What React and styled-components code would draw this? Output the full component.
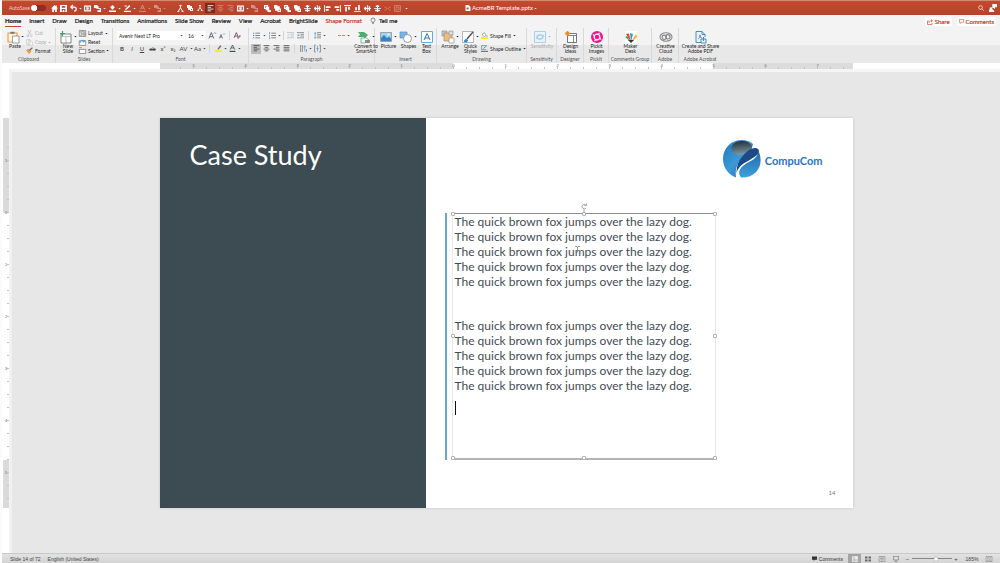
import React from "react";
import styled, { createGlobalStyle } from "styled-components";

const Global = createGlobalStyle`
  * { box-sizing: border-box; }
  body { margin: 0; font-family: "Liberation Sans", Arial, sans-serif; background: #e7e7e7; }
  button, select, input { font-family: inherit; margin: 0; }
`;

/* ---------- icons, all on a 12 x 12 grid ---------- */
const Svg = styled.svg`
  flex: none;
  display: block;
  width: ${(p) => p.$s}px;
  height: ${(p) => p.$s}px;
  overflow: visible;
`;
const B = "#2f8ad0";
const G = "#555";
const S = { fill: "none", stroke: "currentColor", strokeWidth: 1.3 };
const lines = (a) => a.map(([x, y, w], i) => <path key={i} d={`M${x} ${y}h${w}`} {...S} />);

const art = {
  home: <path fill="currentColor" d="M6 0 0 6h2v6h3V8h2v4h3V6h2L10 4V1H8v1z" />,
  save: <path fill="currentColor" fillRule="evenodd" d="M0 0h12v12H0zM3 1.500h6v3H3zM3 7h6v4H7V8.500H5V11H3z" />,
  undo: <path {...S} strokeWidth="2.200" d="M5 0 1.500 3.500 5 7M2 3.500h5c5 0 5 7 0 7" />,
  slide: <path fill="currentColor" fillRule="evenodd" d="M0 1h12v10H0zM2 3v6h8V3zM4 4h4v4H4z" />,
  stack: <path fill="currentColor" d="M0 0h6v2h2v3h4v7H6V9h4V7H6V6H3V5H0z" />,
  fill: <path fill="currentColor" d="M6 0l4 4-4 4-4-4zM0 9.500h12V12H0z" />,
  pen: <path fill="currentColor" d="M9 0l2 2-7 6-2 .5.500-2zM0 10h12v2H0zM1 1h4v1.500H1z" />,
  font: <path {...S} strokeWidth="1.600" d="M2.500 8 6 0l3.500 8M4 5.500h4M0 11h12" />,
  tree: <path {...S} strokeWidth="1.700" d="M4 1h4M6 1v4M2 11l4-6 4 6M1 11h3M8 11h3" />,
  left: lines([[1, 1, 10], [1, 4, 6], [1, 7, 10], [1, 10, 6]]),
  center: lines([[1, 1, 10], [3, 4, 6], [1, 7, 10], [3, 10, 6]]),
  right: lines([[1, 1, 10], [5, 4, 6], [1, 7, 10], [5, 10, 6]]),
  justify: lines([[1, 1, 10], [1, 4, 10], [1, 7, 10], [1, 10, 10]]),
  front: <path fill="currentColor" fillRule="evenodd" d="M0 0h7v3h2v6h3v3H6V9H3V7H0zM2 2v3h1V3h2V2z" />,
  back: <path fill="currentColor" fillRule="evenodd" d="M0 0h6v2h4v4h2v6H6v-2H2V6H0zM8 8v2h2V8z" />,
  distV: <path fill="currentColor" d="M0 5h12v1.500H0zM3 1h6v2.500H3zM2 8h8v2.500H2zM5 0h2v12H5z" />,
  distH: <path fill="currentColor" d="M5 0h1.500v12H5zM1 3h2.500v6H1zM8 2h2.500v8H8zM0 5h12v2H0z" />,
  objL: <path fill="currentColor" d="M0 0h1.500v12H0zM3 2h8v3H3zM3 7h5v3H3z" />,
  objR: <path fill="currentColor" d="M10.500 0H12v12h-1.500zM1 2h8v3H1zM4 7h5v3H4z" />,
  objT: <path fill="currentColor" d="M0 0h12v1.500H0zM2 3h3v8H2zM7 3h3v5H7z" />,
  objB: <path fill="currentColor" d="M0 10.500h12V12H0zM2 4h3v5H2zM7 0h3v9H7z" />,
  group: <path {...S} d="M1 1h10v10H1zM3.500 3.500h5v5h-5z" />,
  flip: <path {...S} d="M1 3l4 3-4 4M11 3 7 6l4 4" />,
  search: <g {...S}><circle cx="5" cy="5" r="3.700" /><path d="m8 8 3.500 3.500" /></g>,
  people: <path fill="#fff" d="M5 0h7v5H9v3L7 6H5zM3 5a2 2 0 0 1 2 2c0 2 3 1 3 5H0c0-4 1-4 1-5a2 2 0 0 1 2-2z" />,
  doc: <g><path fill="#fff" d="M1 0h6l4 4v8H1z" /><path fill="#bd482e" d="M3 5h4v4H3z" /></g>,
  chevron: <path d="M1 4l5 5 5-5z" fill="currentColor" />,
  bulb: <g {...S} strokeWidth="1"><path d="M4 8.500C4 7 2 6.500 2 4a4 4 0 0 1 8 0c0 2.500-2 3-2 4.500zM4 10.500h4" /></g>,
  share: <g {...S}><path d="M4 4H1v7h9V8M4 8c0-4 3-4.500 6-4.500M8 1l3 2.500L8 6" /></g>,
  comment: <path {...S} d="M1 1h10v7H6l-3 3V8H1z" />,
  commentFill: <path fill="currentColor" d="M0 1h12v8H7l-3 3V9H0z" />,
  paste: <g><path d="M1 2h9v9H1z" fill="#fff6e8" stroke="#e79b3c" strokeWidth="1.100" /><path d="M3.500.8h4v2h-4z" fill="#777" /><path d="M5.500 5H12v7H5.500z" fill="#fff" stroke="#777" strokeWidth=".7" /></g>,
  cut: <g fill="none" stroke="#aaa"><path d="M3 0l5 8M9 0 4 8" /><circle cx="3" cy="10" r="1.600" /><circle cx="9" cy="10" r="1.600" stroke="#9cc6e6" /></g>,
  copy: <g fill="#fafafa" stroke="#bbb"><path d="M1 1h6v8H1zM4 3h5l2 2v6H4z" /></g>,
  format: <g><path fill="#ef9a47" d="M0 5l5-2 4 5-4 4z" /><path d="M6 6 11 1" stroke="#666" strokeWidth="2" /></g>,
  newSlide: <g><path d="M1 3h10v9H1z" fill="#fff" stroke="#777" strokeWidth=".9" /><path d="M1 5.500h10M6 5.500V12" stroke="#999" strokeWidth=".6" /><path d="M2.500 0v5M0 2.500h5" stroke="#3ba272" strokeWidth="1.200" /></g>,
  layout: <g><path d="M.5 1h11v10H.5z" fill="#fff" stroke="#555" /><path d="M2 3h8M2 5h3v4H2M7 5h3v4H7z" stroke="#555" fill="none" /></g>,
  reset: <g><path d="M.5 3h11v8H.5z" fill="#fff" stroke="#555" /><path d="M2 7c0-6 6-5 7-2M9 2v3H6" stroke={B} strokeWidth="1.300" fill="none" /></g>,
  section: <g><path d="M.5 4h11v7H.5z" fill="#fff" stroke="#555" /><path d="M0 1h5" stroke="#d87a3c" strokeWidth="1.500" /></g>,
  growA: <g {...S}><path d="M0 11 4 1l4 10M1.500 8h5" /><path d="M8 3l2-2 2 2" stroke={B} /></g>,
  shrinkA: <g {...S}><path d="M1 11 4 3l3 8M2 8h4" /><path d="M8 1l2 2 2-2" stroke={B} /></g>,
  clear: <g {...S}><path d="M0 10 4 1l4 9M1.500 7h5" /><path d="M6 11l5-5" stroke="#cf5ba6" strokeWidth="3" /></g>,
  highlight: <g><path d="M4 7 9 0l2 2-5 6z" fill="#777" /><path d="M0 9h11v3H0z" fill="#ffea00" /></g>,
  colorA: <g {...S}><path d="M2 8 6 0l4 8M3.500 5h5" /><path d="M1 11h10" stroke="#3c4b54" strokeWidth="2" /></g>,
  bullets: <g><path d="M0 2h2M0 6h2M0 10h2" stroke={B} strokeWidth="1.800" /><path d="M4 2h8M4 6h8M4 10h8" stroke={G} strokeWidth="1.200" /></g>,
  numbers: <g><path d="M1 0v3.500M1 4.500V8M1 9v3" stroke={B} strokeWidth="1.200" /><path d="M4 2h8M4 6h8M4 10h8" stroke={G} strokeWidth="1.200" /></g>,
  outdent: <g fill="none" stroke="#aaa"><path d="M0 1h12M6 4h6M6 7h6M0 10h12" /><path d="M4 4 1 5.500 4 7" stroke="#9cc6e6" /></g>,
  indent: <g fill="none" stroke={G}><path d="M0 1h12M6 4h6M6 7h6M0 10h12" /><path d="M0 5.500h4M2 3.500l2 2-2 2" stroke={B} /></g>,
  spacing: <g fill="none" stroke={G}><path d="M5 1h7M5 4h7M5 7h7M5 10h7" /><path d="M2 1v10M.5 3 2 1l1.500 2M.5 9 2 11l1.500-2" stroke={B} /></g>,
  columns: <g stroke={B} strokeWidth="1.300"><path d="M0 6h5M7 6h5" /></g>,
  textDir: <g fill="none" stroke={G}><path d="M1 0v12M4 0v12" /><path d="M8 11V2M6 4l2-3 2 3" stroke={B} /><path d="M11 7v5" /></g>,
  textAlign: <g fill="none" stroke={G}><path d="M3 0H1v12h2M9 0h2v12H9" /><path d="M6 1v10M4 6h4" stroke={B} /></g>,
  smartArt: <g><path fill="#4eaa6e" d="M0 1h6l4 3-4 4V6H0l2-2.500z" /><path fill="#eef7f0" stroke="#4eaa6e" strokeWidth=".7" d="M3 7h4V6l4 3-4 3H3z" /><path d="M7 9h5v3H7z" fill="#8a8a8a" /></g>,
  picture: <g><path d="M.5 1.500h11v9H.5z" fill="#9fd3f3" stroke="#888" strokeWidth=".7" /><path fill="#3383c4" d="M1 10V7l3-3 3 3 2-1.500 2 2V10z" /><circle cx="8.500" cy="3.500" r="1" fill="#fff" /></g>,
  shapes: <g stroke="#4b90c8" strokeWidth=".7"><path d="M0 1h7v6H0z" fill="#79b6e6" /><circle cx="7.500" cy="7.500" r="4" fill="#fff" stroke="#777" /></g>,
  textBox: <g fill="none"><path d="M.5.5h11v11H.5z" fill="#fff" stroke="#66a9dc" /><path d="M3 9 6 2.500 9 9M4 7h4" stroke="#3077b4" /></g>,
  arrange: <g stroke="#888" strokeWidth=".6"><path d="M0 0h5v5H0z" fill="#c8c8c8" /><path d="M2 2h8v8H2z" fill="#f3bd70" /><path d="M7 7h5v5H7z" fill="#fff" /><path d="M7 0h4v4H7z" fill="#dedede" /></g>,
  quick: <g><path d="M.5.5h11v11H.5z" fill="#fff" stroke="#999" strokeWidth=".7" /><path d="M5 8 11 1" stroke="#555" strokeWidth="1.500" /><path fill="#2f8ad0" d="M2 11c0-3 2-4 4-2 0 2-2 3-4 2z" /></g>,
  shapeFill: <g><path fill="#fff" stroke="#666" d="m5 1 4 4-3 3-4-3z" /><path fill={B} d="M10 5l1.500 3h-2z" /><path fill="#ffea00" d="M0 9h12v3H0z" /></g>,
  shapeOut: <g><path fill="none" stroke="#666" d="M9 1H1v7h8" /><path d="M4 6 10 1" stroke={B} strokeWidth="1.500" /><path fill={B} d="M0 10h12v2H0z" /></g>,
  sensitivity: <g fill="none" stroke="#a9cfe9"><path d="M.5.5h11v11H.5z" fill="#e8f2f9" /><path d="M3 8c-1-4 5-6 6-2M9 4c1 4-5 6-6 2" strokeWidth="1.500" /></g>,
  design: <g><path fill="#fff" stroke="#666" strokeWidth=".9" d="M2.500 2.500h9v9h-9z" /><path stroke="#666" strokeWidth=".8" d="M2.500 4.500h9M8.500 4.500v7" /><path stroke="#f08a24" strokeWidth="1.200" d="M2.500 0v5M0 2.500h5M.8.8l3.500 3.500M4.300.8.800 4.300" /></g>,
  pickit: <g><circle cx="6" cy="6" r="6" fill="#f2148c" /><circle cx="6" cy="6" r="2.800" fill="none" stroke="#fff" strokeWidth="1.200" /><path stroke="#fff" strokeWidth=".8" fill="none" d="M6 3.200 9 2M8.800 6l1.200 3M6 8.800 3 10M3.200 6 2 3" /></g>,
  maker: <g><path fill="#fff" d="M0 0h12v12H0z" /><path fill="#2f9bd6" d="m6 11-1-9 3 1z" /><path fill="#e7432e" d="M6 11 1 3l3-.5z" /><path fill="#38a458" d="M6 11 0 6l2-1z" /><path fill="#f6a921" d="M6 11 11 3l1 3z" /><path fill="#333" d="M3 9h6l-3 3z" /></g>,
  cloud: <g fill="none" stroke="#888" strokeWidth="1.100"><ellipse cx="6" cy="6" rx="6" ry="4.300" /><circle cx="4.300" cy="6.300" r="2.200" /><circle cx="7.800" cy="5.800" r="2.200" /></g>,
  pdf: <g fill="none" stroke="#2f83cc" strokeWidth=".9"><path d="M6 11.500H1V.5h6L10 3.500V6M7 .5v3h3" /><path d="M6 8h5v4H6zM8.500 10V6M3 8c2-1 3-4 2-4S5 7 7 7" /></g>,
  normal: <g><path d="M1 1h10v10H1z" fill="#eee" stroke="#fff" /><path d="M4 1v10M4 8h7" stroke="#777" /></g>,
  sorter: <path fill="#666" d="M0 1h5v4H0zM7 1h5v4H7zM0 7h5v4H0zM7 7h5v4H7z" />,
  reading: <path fill="none" stroke="#777" d="M0 1h12v10H0zM6 1v10M2 4h3M2 6h3M7 4h3M7 6h3" />,
  show: <path fill="none" stroke="#777" strokeWidth="1.200" d="M0 1h12M1 1v7h10V1M6 8v3M3 11h6" />,
  fit: <path fill="none" stroke="#777" d="M0 1h12v10H0zM3 5V3h2M7 3h2v2M9 7v2H7M5 9H3V7M4 4l4 4" />,
};
const Icon = ({ n, s = 8 }) => (
  <Svg $s={s} viewBox="0 0 12 12" aria-hidden="true">{art[n]}</Svg>
);

/* ---------- shell ---------- */
const App_ = styled.div`
  min-height: 100vh;
  display: flex;
  flex-direction: column;
  border-left: 2px solid #fbfbfb;
  color: #333;
`;
const TitleBar = styled.header`
  height: 15px;
  display: grid;
  grid-template-columns: 1fr auto 1fr;
  align-items: center;
  border-top: 1px solid #d58a76;
  background: linear-gradient(#c4492f, #b5432a);
  color: #fff;
`;
const QuickBar = styled.div`
  display: flex;
  align-items: center;
  padding-left: 7px;
  font-size: 5px;
`;
const Toggle = styled.label`
  display: flex;
  align-items: center;
  gap: 1px;
  width: 40px;
  color: #f3d3ca;
  font-family: Lato, sans-serif;
`;
const Switch = styled.input`
  appearance: none;
  width: 15px;
  height: 6px;
  border-radius: 3px;
  background: radial-gradient(circle at 3px 3px, #fff 3px, #8f2f1b 3px);
`;
const Slot = styled.button`
  flex: none;
  width: ${(p) => p.$w || 10}px;
  height: ${(p) => p.$h || 10}px;
  margin-left: ${(p) => p.$gap || 0}px;
  padding: 0;
  border: 0;
  background: ${(p) => p.$bg || "none"};
  color: inherit;
  opacity: ${(p) => (p.$dim ? 0.4 : 1)};
  display: flex;
  align-items: center;
  justify-content: center;
  font-size: 6px;
  line-height: 8px;
`;
const FileName = styled.div`
  display: flex;
  align-items: center;
  gap: 1px;
  font: 400 6px/8px Lato, sans-serif;
  white-space: nowrap;
`;
const BarEnd = styled.div`
  display: flex;
  justify-content: flex-end;
  gap: 2px;
  padding-right: 2px;
`;

const Chrome = styled.div`
  flex: none;
  background: linear-gradient(#f3f3f3 30px, #e8e8e8 30px);
  font-family: Lato, sans-serif;
`;
const TabRow = styled.nav`
  display: flex;
  align-items: center;
  height: 13px;
  padding: 0 4px 0 3px;
  gap: 8px;
`;
const Tab = styled.a`
  height: 11px;
  border-bottom: 1px solid ${(p) => (p.$active ? "#c8432b" : "transparent")};
  font-size: 6px;
  line-height: 8px;
  white-space: nowrap;
  text-decoration: none;
  color: ${(p) => (p.$accent ? "#c8432b" : "#222")};
  font-weight: ${(p) => (p.$active ? 700 : 400)};
  -webkit-text-stroke: 0.2px;
  display: flex;
  align-items: center;
  gap: 3px;
`;
const Actions = styled.div`
  margin-left: auto;
  display: flex;
  gap: 5px;
`;
const Action = styled.button`
  display: flex;
  align-items: center;
  gap: 2px;
  height: 9px;
  padding: 0 2px;
  border: 0;
  border-radius: 2px;
  background: #fff;
  color: #c0452c;
  font-size: 6px;
  line-height: 8px;
  -webkit-text-stroke: 0.2px;
`;

/* ---------- ribbon ---------- */
const Ribbon = styled.div`
  display: flex;
  height: 35px;
  overflow: hidden;
`;
const GroupBox = styled.section`
  flex: none;
  width: ${(p) => p.$w}px;
  border-right: 1px solid ${(p) => (p.$last ? "transparent" : "#d9d9d9")};
  display: flex;
  flex-direction: column;
`;
const GroupBody = styled.div`
  display: flex;
  height: 28px;
  padding: 1px 0 1px ${(p) => p.$pad || 0}px;
`;
const GroupName = styled.div`
  font-size: 5px;
  line-height: 6px;
  text-align: center;
  color: #555;
  white-space: nowrap;
`;
const Rows = styled.div`
  flex: 1;
  display: flex;
  flex-direction: column;
`;
const Row = styled.div`
  flex: 1;
  display: flex;
  align-items: center;
  color: #444;
`;
const SmallTool = styled.button`
  flex: 1;
  display: flex;
  align-items: center;
  gap: 2px;
  padding: 0;
  border: 0;
  background: none;
  font-size: 5px;
  line-height: 6px;
  white-space: nowrap;
  color: ${(p) => (p.$dim ? "#aaa" : "#222")};
`;
const BigTool = styled.button`
  flex: none;
  width: ${(p) => p.$w}px;
  padding: 0;
  border: 0;
  background: none;
  display: flex;
  flex-direction: column;
  align-items: center;
  font-size: 5px;
  line-height: 5px;
  white-space: pre;
  color: ${(p) => (p.$dim ? "#aaa" : "#222")};
`;
const BigIcon = styled.span`
  display: flex;
  align-items: center;
  height: 15px;
  gap: 2px;
`;
const Field = styled.span`
  display: flex;
  align-items: center;
  height: 9px;
  width: ${(p) => p.$w}px;
  padding-right: 2px;
  margin-right: 1px;
  background: #fff;
`;
const Select = styled.select`
  appearance: none;
  flex: 1;
  min-width: 0;
  height: 9px;
  padding: 0 0 0 2px;
  border: 0;
  background: none;
  font-size: 5px;
  color: #222;
`;
const Divider = styled.span`
  width: 1px;
  height: 9px;
  margin: 0 ${(p) => p.$m || 2}px;
  background: #d4d4d4;
`;

const Group = ({ name, w, pad, last, children }) => (
  <GroupBox $w={w} $last={last} aria-label={name}>
    <GroupBody $pad={pad}>{children}</GroupBody>
    <GroupName>{name}</GroupName>
  </GroupBox>
);
const Big = ({ icon, w, s = 12, chev, dim, children }) => (
  <BigTool $w={w} $dim={dim}>
    <BigIcon>
      <Icon n={icon} s={s} />
      {chev && <Icon n="chevron" s={3} />}
    </BigIcon>
    {children}
  </BigTool>
);
const Small = ({ icon, chev, dim, children }) => (
  <SmallTool $dim={dim}>
    <Icon n={icon} s={7} />
    {children}
    {chev && <Icon n="chevron" s={3} />}
  </SmallTool>
);
const T = ({ n, s = 7, ...rest }) => (
  <Slot aria-label={n} {...rest}><Icon n={n} s={s} /></Slot>
);
const Chev = ({ w = 5, ...rest }) => (
  <Slot $w={w} aria-label="More" {...rest}><Icon n="chevron" s={3} /></Slot>
);

/* ---------- rulers and canvas ---------- */
const HRuler = styled.div`
  flex: none;
  display: flex;
  justify-content: center;
  height: 6px;
  padding-left: 10px;
  background: #fff;
`;
const HScale = styled.div`
  width: 693px;
  padding-left: 8px;
  display: flex;
  background:
    repeating-linear-gradient(90deg, transparent 0 12px, #c4c4c4 12px 13px) 8px 4px / 100% 2px no-repeat,
    linear-gradient(90deg, #dcdcdc 293px, #fff 293px 553px, #dcdcdc 553px);
`;
const VScale = styled.div`
  height: 390px;
  padding-top: 17px;
  background:
    repeating-linear-gradient(transparent 0 12px, #c4c4c4 12px 13px) 4px 17px / 2px 100% no-repeat,
    linear-gradient(#dadada 95px, #fff 95px 342px, #dadada 342px);
`;
const Mark = styled.span`
  flex: none;
  display: flex;
  align-items: ${(p) => (p.$v ? "center" : "flex-start")};
  justify-content: center;
  width: ${(p) => (p.$v ? 6 : 52)}px;
  height: ${(p) => (p.$v ? 52 : 5)}px;
  font-size: 4px;
  line-height: 5px;
  color: #666;
`;
const Work = styled.div`
  flex: 1;
  display: flex;
`;
const VRuler = styled.div`
  flex: none;
  width: 8px;
  padding: 3px 0 0 1px;
  border-right: 1px solid #f4f4f4;
  background: #fff;
  display: flex;
  flex-direction: column;
  justify-content: center;
`;
const Stage = styled.main`
  flex: 1;
  display: flex;
  align-items: center;
  justify-content: center;
  border-top: 3px solid #f5f5f5;
  border-left: 2px solid #f0f0f0;
  background: #e7e7e7;
`;
const Slide = styled.article`
  display: grid;
  grid-template-columns: 266px 427px;
  min-height: 390px;
  background: #fff;
  box-shadow: 0 0 3px rgba(0, 0, 0, 0.14);
`;
const Panel = styled.div`
  padding: 20px 30px;
  background: #3d4c53;
`;
const Heading = styled.h1`
  margin: 0;
  font: 400 27px/34px Lato, sans-serif;
  color: #fff;
`;
const Content = styled.div`
  display: flex;
  flex-direction: column;
  padding: 21px 17px 10px 19px;
`;
const Brand = styled.div`
  align-self: flex-end;
  display: flex;
  align-items: center;
  gap: 3px;
  margin-right: 13px;
  font: 700 11px/16px Lato, sans-serif;
  color: #2b74bd;
`;
const BrandName = styled.span`
  padding-top: 4px;
`;
const BrandMark = styled.svg`
  width: 40px;
  height: 40px;
`;
const Body = styled.div`
  display: flex;
  margin-top: 34px;
  padding-left: 5px;
  border-left: 2px solid #62aac6;
`;
const Frame = styled.div`
  position: relative;
  width: 264px;
  min-height: 247px;
  padding: 0 2px;
  border: 1px solid #e8e8e8;
  border-top-color: #8d8d8d;
  border-bottom: 2px solid #b4b4b4;
  font: 400 12px/15px Lato, sans-serif;
  color: #3f4d56;
  white-space: nowrap;
`;
const Para = styled.p`
  margin: 0 0 ${(p) => p.$after}px;
`;
const Caret = styled.span`
  display: block;
  width: 1px;
  height: 14px;
  background: #111;
`;
const Handle = styled.span`
  position: absolute;
  left: ${(p) => p.$x}%;
  top: ${(p) => p.$y}%;
  width: 4px;
  height: 4px;
  margin: -2px;
  border: 1px solid #b0b0b0;
  border-radius: 1px;
  background: #fff;
`;
const Rotate = styled.svg`
  position: absolute;
  left: 50%;
  top: -11px;
  width: 6px;
  height: 10px;
  margin-left: -3px;
`;
const Pointer = styled.svg`
  position: absolute;
  left: 122px;
  top: 32px;
  width: 5px;
  height: 7px;
`;
const PageNo = styled.div`
  margin-top: auto;
  text-align: right;
  font: 400 6px/10px Lato, sans-serif;
  color: #777;
`;

/* ---------- status bar ---------- */
const Status = styled.footer`
  flex: none;
  height: 10px;
  display: flex;
  align-items: center;
  padding: 0 6px 0 8px;
  border-top: 1px solid #c9c9c9;
  background: linear-gradient(#e2e2e2, #d4d4d4);
  font-size: 5px;
  line-height: 8px;
  color: #444;
`;
const Lang = styled.span`
  margin-left: 7px;
  margin-right: auto;
`;
const Notes = styled.button`
  display: flex;
  align-items: center;
  gap: 2px;
  padding: 0;
  margin-right: 5px;
  border: 0;
  background: none;
  font-size: 5px;
  color: #333;
`;
const Zoom = styled.input`
  appearance: none;
  width: 40px;
  height: 8px;
  background: linear-gradient(#888, #888) center / 100% 1px no-repeat;
  &::-webkit-slider-thumb {
    appearance: none;
    width: 4px;
    height: 4px;
    border-radius: 2px;
    background: #fff;
    box-shadow: 0 0 1px #555;
  }
`;
const Percent = styled.output`
  width: 24px;
  text-align: center;
`;

const tabs = ["Home", "Insert", "Draw", "Design", "Transitions", "Animations", "Slide Show", "Review", "View", "Acrobat", "BrightSlide", "Shape Format"];
const arrangeTools = ["front", "back", "front", "back", "distV", "distH", "objL", "objR", "objT", "objB", "distH", "distV"];
const line = "The quick brown fox jumps over the lazy dog.";
const five = [0, 1, 2, 3, 4];

function QuickAccess() {
  return (
    <QuickBar>
      <Toggle>AutoSave <Switch type="checkbox" /></Toggle>
      <T n="home" /><T n="save" $w={9} /><T n="undo" /><Chev w={4} />
      <T n="slide" /><T n="stack" /><Chev /><T n="fill" /><Chev />
      <T n="pen" /><Chev /><T n="font" $dim /><Chev $dim /><T n="stack" $dim /><Chev $dim />
      <T n="tree" $gap={8} /><T n="back" s={6} /><T n="tree" s={6} />
      <T n="left" $bg="#7a2c1b" /><T n="center" $dim /><T n="right" $dim />
      <T n="slide" /><Chev w={4} /><T n="stack" $dim />
      {arrangeTools.map((n, i) => <T key={i} n={n} $gap={i ? 0 : 3} />)}
      <T n="flip" $dim /><T n="group" $dim /><Chev w={8} />
    </QuickBar>
  );
}

function RibbonBar() {
  return (
    <Ribbon>
      <Group name="Clipboard" w={54} pad={2}>
        <Big icon="paste" w={22} chev>Paste</Big>
        <Rows>
          <Small icon="cut" dim>Cut</Small>
          <Small icon="copy" dim chev>Copy</Small>
          <Small icon="format">Format</Small>
        </Rows>
      </Group>
      <Group name="Slides" w={57} pad={1}>
        <Big icon="newSlide" w={22} chev>{"New\nSlide"}</Big>
        <Rows>
          <Small icon="layout" chev>Layout</Small>
          <Small icon="reset">Reset</Small>
          <Small icon="section" chev>Section</Small>
        </Rows>
      </Group>
      <Group name="Font" w={136} pad={4}>
        <Rows>
          <Row>
            <Field $w={68}><Select aria-label="Font"><option>Avenir Next LT Pro</option></Select><Icon n="chevron" s={3} /></Field>
            <Field $w={20}><Select aria-label="Font size"><option>16</option></Select><Icon n="chevron" s={3} /></Field>
            <T n="growA" /><T n="shrinkA" s={6} /><Divider /><T n="clear" />
          </Row>
          <Row>
            <Slot><b>B</b></Slot><Slot><i>I</i></Slot><Slot><u>U</u></Slot><Slot $w={11}><s>ab</s></Slot>
            <Slot>x²</Slot><Slot>x₂</Slot><Slot $w={11}>AV</Slot><Chev w={4} /><Slot $w={9}>Aa</Slot><Chev w={4} />
            <Divider $m={3} /><T n="highlight" /><Chev w={4} /><T n="colorA" /><Chev w={4} />
          </Row>
        </Rows>
      </Group>
      <Group name="Paragraph" w={126} pad={2}>
        <Rows>
          <Row>
            <T n="bullets" /><Chev w={6} /><T n="numbers" /><Chev /><Divider $m={1} />
            <T n="outdent" /><T n="indent" /><Divider $m={3} /><T n="spacing" /><Chev />
            <T n="columns" $gap={9} /><Chev />
          </Row>
          <Row>
            <T n="left" $bg="#bdbdbd" /><T n="center" /><T n="right" /><T n="justify" />
            <Divider $m={3} /><T n="textDir" /><Chev w={4} /><T n="textAlign" /><Chev w={4} />
          </Row>
        </Rows>
        <Big icon="smartArt" w={30} chev>{"Convert to\nSmartArt"}</Big>
      </Group>
      <Group name="Insert" w={62} pad={3}>
        <Big icon="picture" w={21} chev>Picture</Big>
        <Big icon="shapes" w={19} chev>Shapes</Big>
        <Big icon="textBox" w={17}>{"Text\nBox"}</Big>
      </Group>
      <Group name="Drawing" w={90} pad={3}>
        <Big icon="arrange" w={20} chev>Arrange</Big>
        <Big icon="quick" w={21} chev>{"Quick\nStyles"}</Big>
        <Rows>
          <Small icon="shapeFill" chev>Shape Fill</Small>
          <Small icon="shapeOut" chev>Shape Outline</Small>
        </Rows>
      </Group>
      <Group name="Sensitivity" w={30}><Big icon="sensitivity" w={30} chev dim>Sensitivity</Big></Group>
      <Group name="Designer" w={27}><Big icon="design" w={27}>{"Design\nIdeas"}</Big></Group>
      <Group name="Pickit" w={25}><Big icon="pickit" w={25}>{"Pickit\nImages"}</Big></Group>
      <Group name="Comments Group" w={43}><Big icon="maker" w={43}>{"Maker\nDesk"}</Big></Group>
      <Group name="Adobe" w={27}><Big icon="cloud" w={27}>{"Creative\nCloud"}</Big></Group>
      <Group name="Adobe Acrobat" w={43} last><Big icon="pdf" w={43}>{"Create and Share\nAdobe PDF"}</Big></Group>
    </Ribbon>
  );
}

function Logo() {
  return (
    <Brand>
      <BrandMark viewBox="0 0 40 40" role="img" aria-label="CompuCom logo">
        <defs>
          <linearGradient id="ball" x1="0" y1="0" x2="1" y2="1">
            <stop offset="0" stopColor="#2276bd" /><stop offset=".5" stopColor="#3a9ad6" /><stop offset="1" stopColor="#1c5da6" />
          </linearGradient>
          <linearGradient id="cap" x1="0" y1="0" x2="0" y2="1">
            <stop offset="0" stopColor="#24343d" /><stop offset="1" stopColor="#7d9aa6" />
          </linearGradient>
          <linearGradient id="leaf" x1="0" y1="0" x2="0" y2="1">
            <stop offset="0" stopColor="#2468aa" /><stop offset="1" stopColor="#3fa0dc" />
          </linearGradient>
        </defs>
        <path fill="url(#ball)" d="M20 1C9 1 1 9 1 20c0 9 6 16 13 18.500C13 30 15 24 21 18c5-5 9-6 10-13-3-3-7-4-11-4z" />
        <ellipse cx="19.500" cy="9" rx="10.500" ry="7" fill="url(#cap)" transform="rotate(-5 19.500 9)" />
        <path fill="#1b4a86" d="M14.500 34c0-9 3-14 9-20 4-4 9-7 13-3.500 2 4-3 7-8 10-7 4-11 6-14 13.500z" />
        <path fill="url(#leaf)" d="M19 38.500c-4-5-1-11 6-14.500 6-3 11-6 11.500-12 6 13-1 27-17.500 26.500z" />
        <path fill="none" stroke="#fff" strokeWidth="1.200" d="M16 39c-2-7 1-11 7-14.500" />
      </BrandMark>
      <BrandName>CompuCom</BrandName>
    </Brand>
  );
}

export default function App() {
  return (
    <App_>
      <Global />
      <TitleBar>
        <QuickAccess />
        <FileName><Icon n="doc" s={6} />AcmeBR Template.pptx <Icon n="chevron" s={3} /></FileName>
        <BarEnd><T n="search" s={6} /><T n="people" s={8} /></BarEnd>
      </TitleBar>
      <Chrome>
        <TabRow>
          {tabs.map((t) => (
            <Tab key={t} href="#" $active={t === "Home"} $accent={t === "Shape Format"}>{t}</Tab>
          ))}
          <Tab href="#"><Icon n="bulb" s={6} />Tell me</Tab>
          <Actions>
            <Action><Icon n="share" s={6} />Share</Action>
            <Action><Icon n="comment" s={5} />Comments</Action>
          </Actions>
        </TabRow>
        <RibbonBar />
      </Chrome>
      <HRuler>
        <HScale>
          {[5, 4, 3, 2, 1, 0, 1, 2, 3, 4, 5, 6, 7].map((n, i) => <Mark key={i}>{n}</Mark>)}
        </HScale>
      </HRuler>
      <Work>
        <VRuler>
          <VScale>
            {[1, 0, 1, 2, 3, 4, 5].map((n, i) => <Mark key={i} $v>{n}</Mark>)}
          </VScale>
        </VRuler>
        <Stage>
          <Slide>
            <Panel><Heading>Case Study</Heading></Panel>
            <Content>
              <Logo />
              <Body>
                <Frame>
                  {[29, 8].map((after) => (
                    <Para key={after} $after={after}>
                      {five.map((i) => <React.Fragment key={i}>{line}<br /></React.Fragment>)}
                    </Para>
                  ))}
                  <Caret />
                  <Rotate viewBox="0 0 6 10"><path d="M3 6.500V10M4.700 2A2.200 2.200 0 1 0 5 5M5.500.5v2h-2" fill="none" stroke="#999" strokeWidth=".9" /></Rotate>
                  <Pointer viewBox="0 0 5 7"><path d="M0 .5h2l.5 1 .5-1h2M2.500 1v5.500M1 4.500h3" fill="none" stroke="#888" strokeWidth=".8" /></Pointer>
                  {[[0, 0], [50, 0], [100, 0], [0, 50], [100, 50], [0, 100], [50, 100], [100, 100]].map(([x, y]) => (
                    <Handle key={`${x}-${y}`} $x={x} $y={y} />
                  ))}
                </Frame>
              </Body>
              <PageNo>14</PageNo>
            </Content>
          </Slide>
        </Stage>
      </Work>
      <Status>
        <span>Slide 14 of 72</span>
        <Lang>English (United States)</Lang>
        <Notes><Icon n="commentFill" s={5} />Comments</Notes>
        <T n="normal" s={6} $w={13} $h={9} $bg="#a5a5a5" />
        <T n="sorter" s={6} $w={14} /><T n="reading" s={6} $w={14} /><T n="show" s={6} $w={14} />
        <Slot $w={9}>−</Slot>
        <Zoom type="range" aria-label="Zoom" defaultValue={62} />
        <Slot $w={8}>+</Slot>
        <Percent>185%</Percent>
        <T n="fit" s={6} />
      </Status>
    </App_>
  );
}
